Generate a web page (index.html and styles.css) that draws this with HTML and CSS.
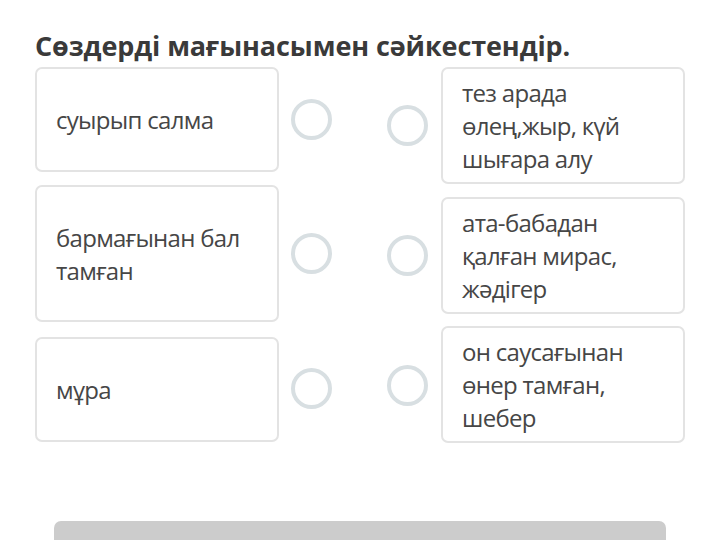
FILE: index.html
```html
<!DOCTYPE html>
<html lang="kk">
<head>
<meta charset="utf-8">
<link rel="stylesheet" href="styles.css">
</head>
<body>
<div class="page">
  <h1 class="title">Сөздерді мағынасымен сәйкестендір.</h1>
  <div class="match">
    <div class="col col-left">
      <div class="item">
        <div class="card card-l1">суырып салма</div>
        <span class="dot"></span>
      </div>
      <div class="item">
        <div class="card card-l2">бармағынан бал тамған</div>
        <span class="dot"></span>
      </div>
      <div class="item">
        <div class="card card-l3">мұра</div>
        <span class="dot"></span>
      </div>
    </div>
    <div class="col col-right">
      <div class="item">
        <span class="dot"></span>
        <div class="card card-r">тез арада өлең,жыр, күй шығара алу</div>
      </div>
      <div class="item">
        <span class="dot"></span>
        <div class="card card-r">ата-бабадан қалған мирас, жәдігер</div>
      </div>
      <div class="item">
        <span class="dot"></span>
        <div class="card card-r card-r3">он саусағынан өнер тамған, шебер</div>
      </div>
    </div>
  </div>
  <div class="footer-bar"></div>
</div>
</body>
</html>
```
FILE: styles.css
```css
html, body {
  margin: 0;
  padding: 0;
  background: #ffffff;
}
body {
  font-family: "Open Sans", "Noto Sans", sans-serif;
  color: #464646;
  width: 720px;
  height: 540px;
  overflow: hidden;
}
.page {
  padding: 30px 0 0 35px;
}
.title {
  margin: 0 0 5px 0;
  font-size: 27px;
  font-weight: 700;
  color: #3a3a3a;
  line-height: 32px;
  letter-spacing: -0.1px;
}
.match {
  display: flex;
}
.col {
  display: flex;
  flex-direction: column;
}
.col-left {
  width: 316px;
  gap: 13px;
}
.col-right {
  margin-left: 36px;
  gap: 13px;
}
.item {
  display: flex;
  align-items: center;
}
.card {
  box-sizing: border-box;
  width: 244px;
  border: 2px solid #e3e3e3;
  border-radius: 7px;
  padding: 0 14px 0 19px;
  font-size: 24px;
  letter-spacing: -0.7px;
  line-height: 33px;
  display: flex;
  align-items: center;
}
.card-l1 { height: 105px; }
.card-l2 { height: 137px; }
.card-l3 { height: 105px; margin-top: 2px; }
.card-r { height: 117px; }
.card-r3 { margin-top: -1px; }
.col-left .dot {
  margin-left: 12px;
}
.col-right .dot {
  margin-right: 13px;
}
.dot {
  box-sizing: border-box;
  width: 41px;
  height: 41px;
  border: 4px solid #d8dfe2;
  border-radius: 50%;
  flex: none;
}
.footer-bar {
  margin: 78px 0 0 19px;
  width: 612px;
  height: 40px;
  background: #cccccc;
  border-radius: 7px;
}
```
